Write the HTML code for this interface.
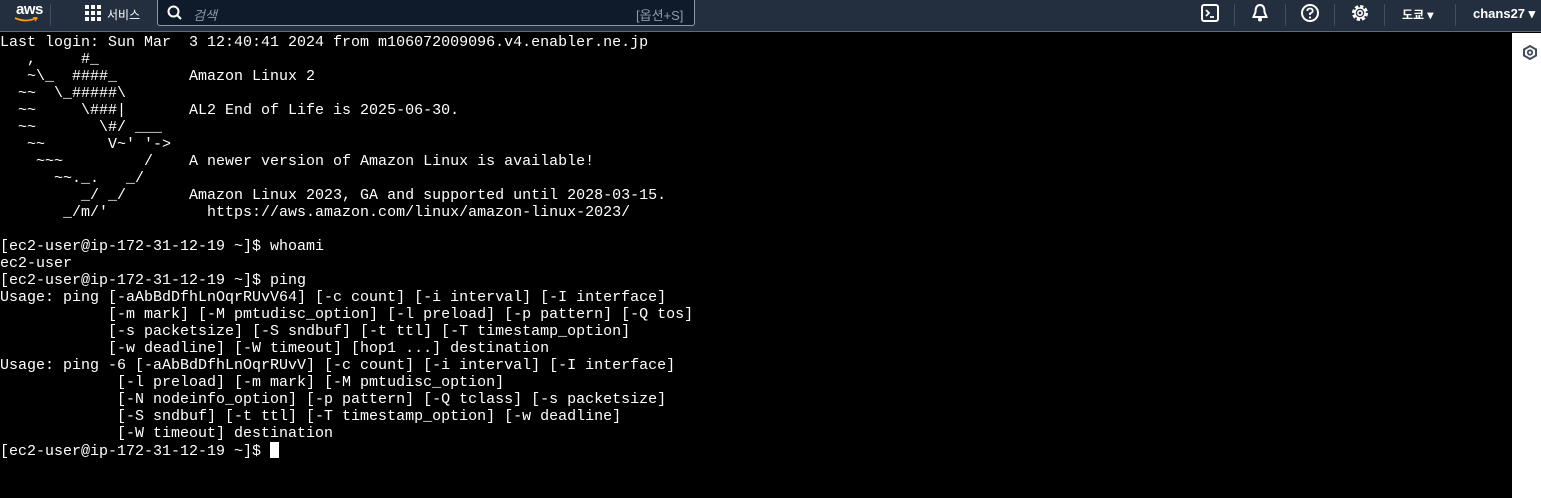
<!DOCTYPE html>
<html><head><meta charset="utf-8"><style>
*{margin:0;padding:0;box-sizing:border-box}
body{width:1541px;height:498px;overflow:hidden;background:#000;position:relative;font-family:"Liberation Sans","Noto Sans CJK KR",sans-serif}
#hdr{position:absolute;left:0;top:0;width:1541px;height:32px;background:#232f3e;border-bottom:1px solid #5f6b7a;color:#fff}
.sep{position:absolute;top:4px;width:1px;height:22px;background:#414d5c}
#term{position:absolute;left:0;top:34px;width:1512px;height:464px;background:#000;color:#fff;font-family:"Liberation Mono",monospace;font-size:15px;line-height:17px;white-space:pre}
#side{position:absolute;left:1512px;top:33px;width:29px;height:465px;background:#fff}
.cur{display:inline-block;width:9px;height:16px;background:#fff;vertical-align:-3px}
</style></head><body>
<div id="hdr">
 <div style="position:absolute;left:16px;top:1px;font-size:15px;font-weight:bold;letter-spacing:-0.5px">aws</div>
 <svg style="position:absolute;left:14px;top:17px" width="24" height="6"><path d="M1 1 Q12 6 22 1" stroke="#ff9900" stroke-width="1.8" fill="none"/><path d="M19 0 L23 1 L21 4" stroke="#ff9900" stroke-width="1.3" fill="none"/></svg>
 <div class="sep" style="left:50px"></div>
 <svg style="position:absolute;left:85px;top:5px" width="16" height="16" fill="#fff"><rect x="0" y="0" width="4" height="4"/><rect x="6" y="0" width="4" height="4"/><rect x="12" y="0" width="4" height="4"/><rect x="0" y="6" width="4" height="4"/><rect x="6" y="6" width="4" height="4"/><rect x="12" y="6" width="4" height="4"/><rect x="0" y="12" width="4" height="4"/><rect x="6" y="12" width="4" height="4"/><rect x="12" y="12" width="4" height="4"/></svg>
 <div style="position:absolute;left:107px;top:6px;font-size:12px">서비스</div>
 <div style="position:absolute;left:157px;top:-1px;width:538px;height:27px;border:1px solid #8d99a8;border-top:none;border-radius:0 0 3px 3px;background:#0f1b2a"></div>
 <svg style="position:absolute;left:167px;top:5px" width="16" height="16"><circle cx="6.5" cy="6.5" r="5" stroke="#fff" stroke-width="2" fill="none"/><path d="M10 10 L14 14" stroke="#fff" stroke-width="2"/></svg>
 <div style="position:absolute;left:193px;top:5px;font-size:13px;font-style:italic;color:#8d99a8">검색</div>
 <div style="position:absolute;left:636px;top:5px;font-size:13px;color:#8d99a8">[옵션+S]</div>
 <svg style="position:absolute;left:1201px;top:4px" width="18" height="18"><rect x="1" y="1" width="16" height="16" rx="2" stroke="#fff" stroke-width="2" fill="none"/><path d="M5 6 L8 9 L5 12 M9 13 H13" stroke="#fff" stroke-width="1.8" fill="none"/></svg>
 <div class="sep" style="left:1234px"></div>
 <svg style="position:absolute;left:1251px;top:3px" width="18" height="20"><path d="M9 2 C5 2 4.5 6 4.5 9 L2.5 14 H15.5 L13.5 9 C13.5 6 13 2 9 2Z" stroke="#fff" stroke-width="2" fill="none"/><circle cx="9" cy="16.5" r="2" fill="#fff"/></svg>
 <div class="sep" style="left:1285px"></div>
 <svg style="position:absolute;left:1300px;top:3px" width="20" height="20"><circle cx="10" cy="10" r="8" stroke="#fff" stroke-width="2" fill="none"/><path d="M7.3 8 Q7.3 5.5 10 5.5 Q12.7 5.5 12.7 8 Q12.7 9.5 10 10.5 V12" stroke="#fff" stroke-width="1.8" fill="none"/><circle cx="10" cy="14.5" r="1.1" fill="#fff"/></svg>
 <div class="sep" style="left:1334px"></div>
 <svg style="position:absolute;left:1350px;top:3px" width="20" height="20"><circle cx="10" cy="10" r="6.5" stroke="#fff" stroke-width="3" fill="none" stroke-dasharray="3.2 1.9"/><circle cx="10" cy="10" r="5" stroke="#fff" stroke-width="1.5" fill="none"/><circle cx="10" cy="10" r="2.2" stroke="#fff" stroke-width="1.6" fill="none"/></svg>
 <div class="sep" style="left:1384px"></div>
 <div style="position:absolute;left:1402px;top:6px;font-size:12px;font-weight:bold">도쿄 ▾</div>
 <div class="sep" style="left:1455px"></div>
 <div style="position:absolute;left:1473px;top:6px;font-size:13px;font-weight:bold">chans27 ▾</div>
</div>
<div id="term">Last login: Sun Mar  3 12:40:41 2024 from m106072009096.v4.enabler.ne.jp
   ,     #_
   ~\_  ####_        Amazon Linux 2
  ~~  \_#####\
  ~~     \###|       AL2 End of Life is 2025-06-30.
  ~~       \#/ ___
   ~~       V~' '->
    ~~~         /    A newer version of Amazon Linux is available!
      ~~._.   _/
         _/ _/       Amazon Linux 2023, GA and supported until 2028-03-15.
       _/m/'           https://aws.amazon.com/linux/amazon-linux-2023/

[ec2-user@ip-172-31-12-19 ~]$ whoami
ec2-user
[ec2-user@ip-172-31-12-19 ~]$ ping
Usage: ping [-aAbBdDfhLnOqrRUvV64] [-c count] [-i interval] [-I interface]
            [-m mark] [-M pmtudisc_option] [-l preload] [-p pattern] [-Q tos]
            [-s packetsize] [-S sndbuf] [-t ttl] [-T timestamp_option]
            [-w deadline] [-W timeout] [hop1 ...] destination
Usage: ping -6 [-aAbBdDfhLnOqrRUvV] [-c count] [-i interval] [-I interface]
             [-l preload] [-m mark] [-M pmtudisc_option]
             [-N nodeinfo_option] [-p pattern] [-Q tclass] [-s packetsize]
             [-S sndbuf] [-t ttl] [-T timestamp_option] [-w deadline]
             [-W timeout] destination
[ec2-user@ip-172-31-12-19 ~]$ <span class="cur"></span></div>
<div id="side"><svg style="position:absolute;left:11px;top:12px" width="14" height="15"><path d="M7 1 L13 4.5 V10.5 L7 14 L1 10.5 V4.5Z" stroke="#414d5c" stroke-width="2" fill="none"/><circle cx="7" cy="7.5" r="2.2" stroke="#414d5c" stroke-width="1.8" fill="none"/></svg></div>
</body></html>
